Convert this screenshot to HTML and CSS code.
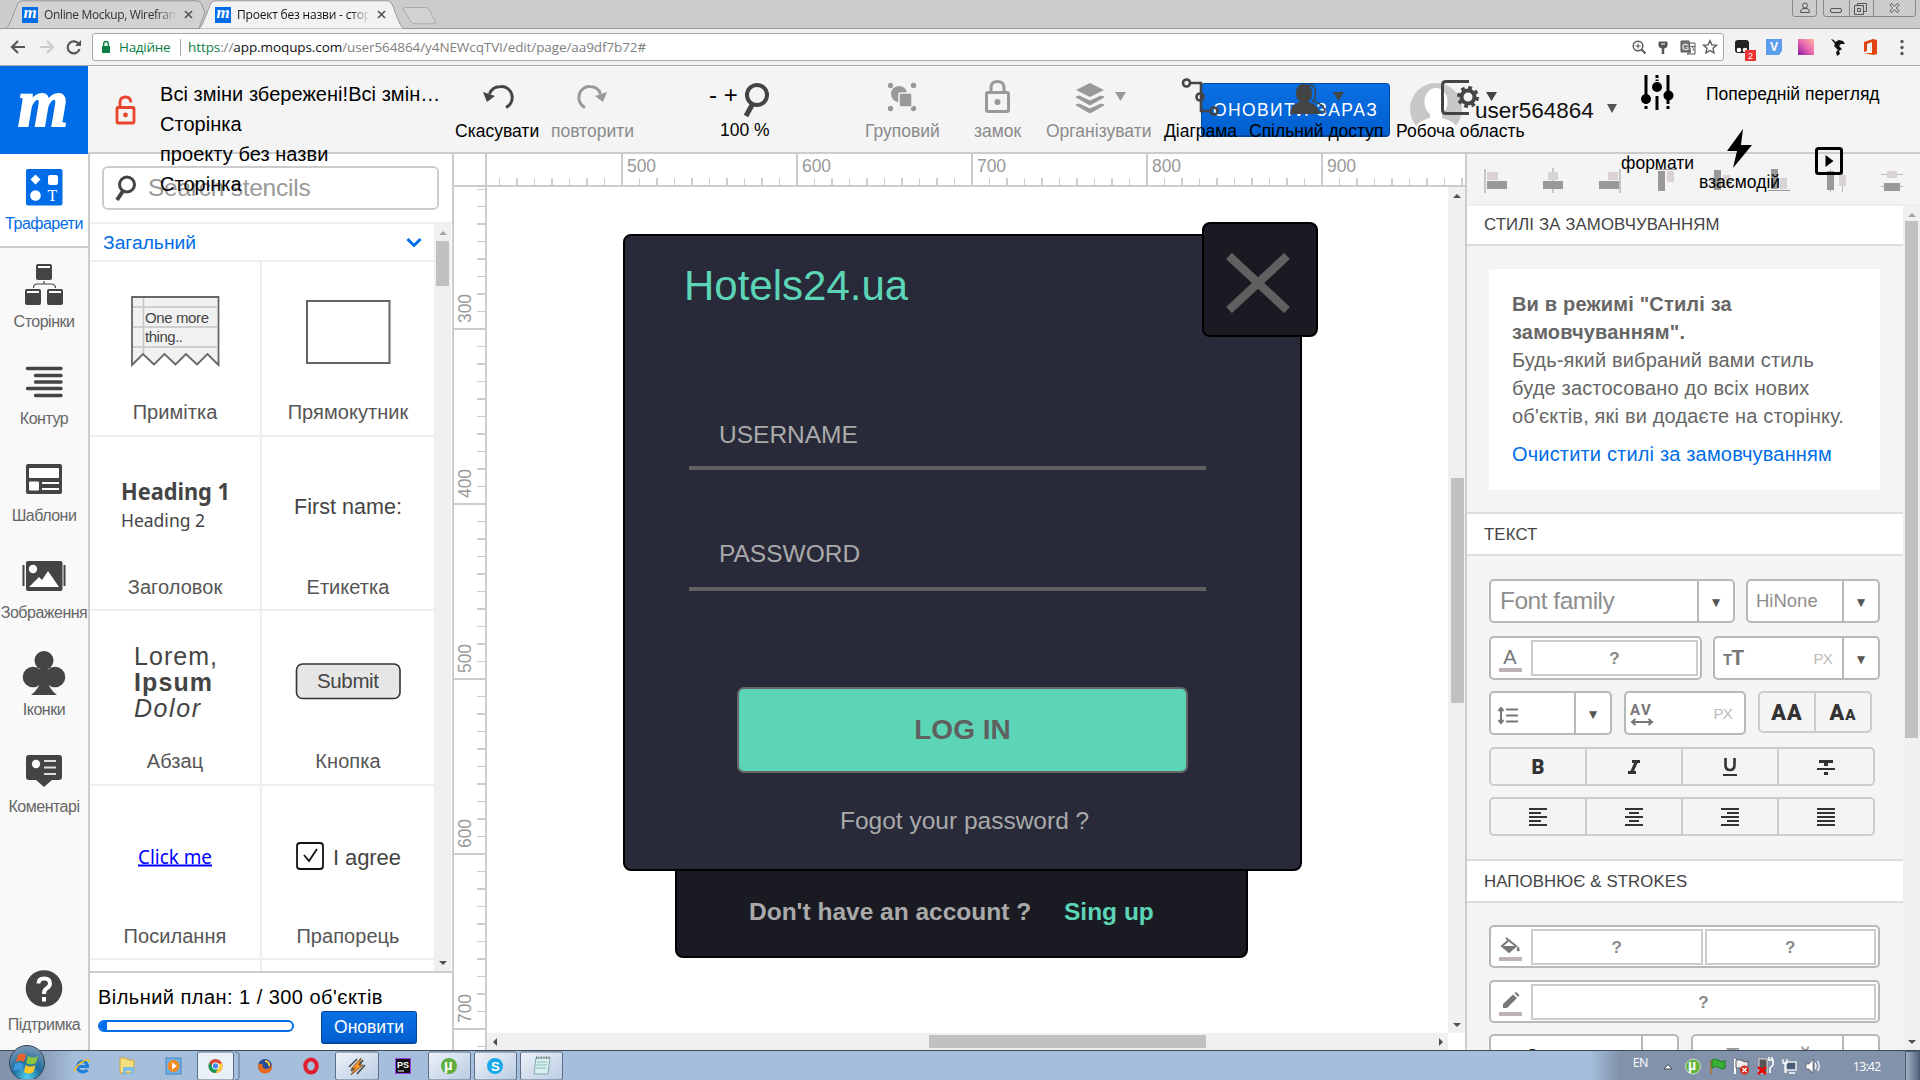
FILE: index.html
```html
<!DOCTYPE html>
<html lang="uk">
<head>
<meta charset="utf-8">
<title>Проект без назви - сторінка</title>
<link rel="stylesheet" href="styles.css">
</head>
<body>
<div class="screen">

<div class="tabstrip">
  <svg class="tab-shapes" width="1920" height="29">
    <rect y="28" width="1920" height="1" fill="#999"/>
    <path d="M6 28.5C10 26 15 9 18 3Q19.500 .8 23 .8H197Q200 .8 201.500 4L205 12L199 28.500Z" fill="#d2d2d2" stroke="#999"/>
    <path d="M199 29C203 26 208 9 211 3Q212.500 .8 216 .8H387Q390.500 .8 392 4C395 10 399 26 404 29Z" fill="#f2f2f2" stroke="#999"/>
    <path d="M402 28.600H1920M0 28.600H199" stroke="#999"/>
    <path d="M406 7.500H425Q428 7.500 429 9.500L435.500 22Q436 23.800 434 23.800H415Q412 23.800 411 22L403 9Q402.500 7.500 406 7.500Z" fill="#d2d2d2" stroke="#aaa"/>
  </svg>
  <div class="tab tab-back"><span class="fav">m</span><span class="tab-text">Online Mockup, Wirefram</span><svg width="9" height="9"><path d="M1 1l7 7M8 1l-7 7" stroke="#555" stroke-width="1.700"/></svg></div>
  <div class="tab"><span class="fav">m</span><span class="tab-text active">Проект без назви - стор</span><svg width="9" height="9"><path d="M1 1l7 7M8 1l-7 7" stroke="#555" stroke-width="1.700"/></svg></div>
  <svg class="win" width="126" height="18" fill="none" stroke="#888">
    <path d="M.5 0V14Q.5 16.500 3 16.500H22Q24.500 16.500 24.500 14V0M31.500 0V14Q31.500 16.500 34 16.500H121Q123.500 16.500 123.500 14V0M57.500 0V16.500M81.500 0V16.500"/>
    <g stroke="#555"><circle cx="13" cy="5.500" r="2.500"/><path d="M8.500 12.500Q8.500 9 11 8.500H15Q17.500 9 17.500 12.500Z"/><rect x="38.500" y="8.500" width="11" height="4" rx="1.500"/><path d="M65.500 5.500V3.500H74.500V11.500H72M62.500 5.500H71.500V14.500H62.500ZM65.500 8.500H68.500V11.500H65.500Z"/><path d="M98.500 4L106.500 12M106.500 4L98.500 12" stroke-width="3"/><path d="M99 4.500L106 11.500M106 4.500L99 11.500" stroke="#eee" stroke-width="1.200"/></g>
  </svg>
</div>

<div class="addressbar">
  <svg width="84" height="36" fill="none" stroke="#555" stroke-width="2.200">
    <path d="M25 18H12M18 12L12 18L18 24"/><path d="M40 18H53M47 12L53 18L47 24" stroke="#ccc"/><path d="M79 15.500A6 6 0 1 0 79.500 20"/><path d="M81 11V17H75Z" fill="#555" stroke="none"/>
  </svg>
  <div class="omnibox">
    <svg width="10" height="14"><path d="M1 6H9V13H1Z" fill="#0b8043"/><path d="M2.700 7V4A2.300 2.500 0 0 1 7.300 4V7" fill="none" stroke="#0b8043" stroke-width="1.400"/></svg>
    <span class="secure">Надійне</span><i class="sep"></i>
    <span class="url"><b>https</b>://<em>app.moqups.com</em>/user564864/y4NEWcqTVI/edit/page/aa9df7b72#</span>
    <svg class="omni-icons" width="96" height="26" fill="none" stroke="#555" stroke-width="1.400">
      <circle cx="11" cy="12" r="4.800"/><path d="M14.500 15.500L18.500 19.500" stroke-width="2"/><path d="M8.500 12H13.500M11 9.500V14.500" stroke-width="1"/>
      <path d="M32 8H40V12Q40 14 36 14Q32 14 32 12ZM36 13V20" fill="#555" stroke-width="1"/><path d="M36 14V20" stroke-width="2.500"/><path d="M34 10H38" stroke="#fff" stroke-width="1"/>
      <path d="M54 7H62L64 18H54Z" fill="#777" stroke="#555" stroke-width="1"/><path d="M63 9H68V20H60L64 18" fill="#fff" stroke-width="1"/><text x="55" y="16" font-size="9" fill="#fff" stroke="none">G</text><path d="M63.500 12.500H68M65 12L67 17" stroke-width=".9"/>
      <path d="M83 6.500L84.900 10.800L89.500 11.200L86 14.300L87.100 18.900L83 16.500L78.900 18.900L80 14.300L76.500 11.200L81.100 10.800Z" stroke-width="1.300"/>
    </svg>
  </div>
  <svg class="ext" width="190" height="36">
    <rect x="9" y="11" width="14" height="13" rx="3" fill="#222"/><circle cx="13" cy="21" r="2.300" fill="#fff"/><circle cx="19" cy="21" r="2.300" fill="#fff"/>
    <rect x="19" y="21" width="11" height="11" fill="#e33"/><text x="22" y="30" font-size="9" fill="#fff">2</text>
    <path d="M40 10H56V22L53 26H40Z" fill="#5c9ded"/><text x="44" y="22" font-size="12" font-weight="bold" fill="#fff">V</text>
    <defs><linearGradient id="pk" x1="1" y1="0" x2="0" y2="1"><stop offset="0" stop-color="#ffb3a0"/><stop offset=".5" stop-color="#e968b0"/><stop offset="1" stop-color="#8b1a9e"/></linearGradient></defs>
    <rect x="72" y="10" width="16" height="16" fill="url(#pk)"/>
    <path d="M105 10L108 11L109 13L113 11L117 12L119 15H115L113 17L116 20L113 22L114 25L111 27L110 23L112 21L108 17L109 15Z" fill="#111"/>
    <path d="M138 13L147 10L151 11V25L147 26L138 24L146 24V13L141 15V22L138 23Z" fill="#e2430f"/>
    <g fill="#555"><circle cx="176" cy="12.500" r="1.700"/><circle cx="176" cy="18.500" r="1.700"/><circle cx="176" cy="24.500" r="1.700"/></g>
  </svg>
</div>

<header class="apphead">
  <svg class="logo" width="88" height="88"><rect width="88" height="88" fill="#006ce8"/><text x="18" y="60" textLength="50" lengthAdjust="spacingAndGlyphs" class="logo-m">m</text></svg>
  <svg class="unlock" width="30" height="50" fill="none" stroke="#e8452c" stroke-width="2.800"><rect x="3" y="14.500" width="17" height="15.500" rx="1"/><path d="M6 14V9Q6.500 4 11.500 4Q16.500 4 17 9.500"/><circle cx="11.500" cy="22" r="2.400" fill="#e8452c" stroke="none"/></svg>
  <div class="titles"><div>Всі зміни збережені!Всі змін…</div><div>Сторінка</div><div>проекту без назви</div><div>Сторінка</div></div>

  <div class="upgrade-now">ОНОВИТИ ЗАРАЗ</div>
  <div class="user">
    <svg width="54" height="54"><defs><clipPath id="av"><circle cx="27" cy="27" r="26"/></clipPath></defs><g clip-path="url(#av)"><rect width="54" height="54" fill="#c8c8c8"/><ellipse cx="27" cy="20" rx="11.500" ry="14" fill="#fff"/><path d="M21 30H33V36Q50 40 52 56H2Q4 40 21 36Z" fill="#fff"/></g></svg>
    <span>user564864</span><i class="caret"></i>
  </div>

  <div class="tools">
    <div class="tool"><svg><g fill="none" stroke="#444" stroke-width="3"><path d="M34.500 28Q37 20.500 46 20.500A10.500 11 0 0 1 51 41.500"/></g><path d="M28 26L40 30L32 36Z" fill="#444"/></svg><span>Скасувати</span></div>
    <div class="tool off"><svg><g fill="none" stroke="#999" stroke-width="3"><path d="M49.500 28Q47 20.500 39 20.500A10.500 11 0 0 0 34 41.500"/></g><path d="M56 26L44 30L52 36Z" fill="#999"/></svg><span>повторити</span></div>
    <div class="tool zoomer"><div class="zoomrow"><span>- +</span><svg width="30" height="42"><circle cx="15" cy="13" r="10" fill="none" stroke="#444" stroke-width="4"/><path d="M10 23L4 34" stroke="#444" stroke-width="5"/></svg></div><span class="pct">100 %</span></div>
    <div class="tool off"><svg fill="#999"><circle cx="25.500" cy="19.500" r="2.700"/><circle cx="48.500" cy="19.500" r="2.700"/><circle cx="25.500" cy="42.500" r="2.700"/><circle cx="48.500" cy="42.500" r="2.700"/><circle cx="34" cy="28" r="8"/><rect x="34" y="27" width="13" height="14" rx="1.500" stroke="#f4f4f4" stroke-width="1.500"/></svg><span>Груповий</span></div>
    <div class="tool off"><svg fill="none" stroke="#999" stroke-width="3"><rect x="12.500" y="26.500" width="22" height="19" rx="1.500"/><path d="M17 26V21Q17.500 15.500 23.500 15.500Q29.500 15.500 30 21V26"/><circle cx="23.500" cy="36" r="3" fill="#999" stroke="none"/></svg><span>замок</span></div>
    <div class="tool off"><svg fill="#999"><path d="M44 17L58 24L44 31L30 24Z"/><path d="M30 31L33 30L44 35L55 30L58 31L44 39ZM30 39L33 38L44 43L55 38L58 39L44 47Z" stroke="#999"/><path d="M69 26H80L74.500 35Z"/></svg><span>Організувати</span></div>
    <div class="tool"><svg fill="none" stroke="#444" stroke-width="2.600"><path d="M26 17H37V45H45"/><circle cx="22.500" cy="17" r="3.500"/><circle cx="36" cy="31" r="3.500"/><circle cx="50" cy="45" r="3.500"/></svg><span>Діаграма</span></div>
    <div class="tool"><svg fill="#444"><path d="M59 20Q64 17 66 23Q68 31 64 35Q75 38 76 46H66" fill="none" stroke="#444" stroke-width="1.500"/><path d="M55 18Q63 18 63 27Q63 33 59 36Q69 38 71 48H41Q42 38 51 36Q47 33 47 27Q47 18 55 18Z"/><path d="M84 26H95L89.500 35Z"/></svg><span>Спільний доступ</span></div>
    <div class="tool"><svg fill="none" stroke="#444" stroke-width="3"><path d="M73 15.500H50Q46.500 15.500 46.500 19V44Q46.500 47.500 50 47.500H73"/><circle cx="72" cy="31" r="6.500" stroke-width="4"/><circle cx="72" cy="31" r="9.500" stroke-width="3" stroke-dasharray="3.800 3.660"/><path d="M90 26H101L95.500 35Z" fill="#444" stroke="none"/></svg><span>Робоча область</span></div>
  </div>

  <div class="modes">
    <svg class="m-format" width="40" height="40"><g stroke="#000" stroke-width="3"><path d="M8 1V30M30 1V30"/><path d="M19 1V7M19 22V36"/></g><rect x="6.500" y="32" width="3" height="3"/><rect x="28.500" y="32" width="3" height="3"/><rect x="17" y="4" width="4" height="1.500" fill="#f4f4f4"/><circle cx="8" cy="25" r="5"/><circle cx="19" cy="13" r="5"/><circle cx="30.500" cy="21.500" r="5"/></svg>
    <span class="m-preview">Попередній перегляд</span>
    <span class="m-formats">формати</span>
    <svg class="m-bolt" width="28" height="40"><path d="M17 0L1 22H11L7 39L26 16H15Z"/></svg>
    <span class="m-inter">взаємодій</span>
    <svg class="m-play" width="28" height="28"><rect x="1.500" y="1.500" width="25" height="25" rx="2" fill="none" stroke="#000" stroke-width="3"/><path d="M10.500 8L18.500 14L10.500 20Z"/></svg>
  </div>
</header>

<main class="work">
  <nav class="side">
    <div class="nav on"><svg><rect x="26" y="15" width="36.500" height="36.500" rx="2" fill="#006ce8"/><g fill="#fff"><path d="M35.500 20.500L40.500 25.500L35.500 30.500L30.500 25.500Z"/><rect x="48" y="21" width="10" height="10" rx="2"/><circle cx="35.500" cy="41.500" r="5.300"/></g><text class="serif" x="47.500" y="47" font-size="16" fill="#fff">T</text></svg><span>Трафарети</span></div>
    <div class="nav"><svg fill="#444"><rect x="36" y="16" width="16" height="16" rx="2"/><rect x="25" y="41" width="16" height="16" rx="2"/><rect x="47" y="41" width="16" height="16" rx="2"/><path d="M38 19H50M27 44H39M49 44H61" stroke="#fff" stroke-width="1.800"/><path d="M44 33V36M33.500 40Q33.500 36 37 36H51Q55.500 36 55.500 40" fill="none" stroke="#444" stroke-width="1.200"/></svg><span>Сторінки</span></div>
    <div class="nav"><svg stroke="#444" stroke-width="3.400" stroke-linecap="round"><path d="M27.500 23.500H61M35.500 30.500H61M35.500 37H61M27.500 43.500H61M35.500 50.500H61"/></svg><span>Контур</span></div>
    <div class="nav"><svg><rect x="26" y="22" width="36" height="30" rx="2" fill="#444"/><g fill="#fff"><rect x="29" y="26" width="30" height="10" rx="1"/><rect x="29" y="39.500" width="10" height="9" rx="1"/><rect x="42" y="40" width="17" height="2"/><rect x="42" y="46" width="17" height="2"/></g></svg><span>Шаблони</span></div>
    <div class="nav"><svg><rect x="26" y="22" width="36.500" height="30" rx="2" fill="#444"/><path d="M23.500 26V47M64.500 26V47" stroke="#444" stroke-width="2"/><circle cx="33" cy="30" r="4.200" fill="#fff"/><path d="M29 48L39 38L42 41L48 32L59 48Z" fill="#fff"/></svg><span>Зображення</span></div>
    <div class="nav"><svg fill="#444"><circle cx="44" cy="24.500" r="9.500"/><circle cx="33" cy="41" r="10.300"/><circle cx="55" cy="41" r="10.300"/><path d="M40 32H48L47 44Q49 53 57 59H31Q39 53 41 44Z"/></svg><span>Іконки</span></div>
    <div class="nav"><svg fill="#444"><path d="M29 22H59Q62 22 62 25V44Q62 47 59 47H52L44 54L36 47H29Q26 47 26 44V25Q26 22 29 22Z"/><circle cx="36" cy="31" r="4.200" fill="#fff"/><path d="M44 28H56M44 34.500H56M44 41H56" stroke="#ddd" stroke-width="1.800"/></svg><span>Коментарі</span></div>
    <div class="nav support"><svg><circle cx="44" cy="37.500" r="18.300" fill="#444"/><path d="M38.500 32.500Q38.500 27.500 44 27.500Q50 27.500 50 32.500Q50 35.500 46.500 37.500Q44 39 44 43" fill="none" stroke="#fff" stroke-width="4"/><rect x="42" y="46" width="4" height="4.500" fill="#fff"/></svg><span>Підтримка</span></div>
  </nav>

  <aside class="stencils">
    <div class="searchrow"><div class="search"><svg width="34" height="40" fill="none" stroke="#444"><circle cx="25" cy="16.500" r="7.500" stroke-width="3"/><path d="M21 23L15 32" stroke-width="4"/></svg><span>Search stencils</span></div></div>
    <div class="listwrap">
      <div class="list">
        <div class="cat"><span>Загальний</span><svg width="16" height="11" fill="none" stroke="#006ce8" stroke-width="3"><path d="M1.500 2L8 8.500L14.500 2"/></svg></div>
        <div class="cells">
          <div class="cell"><svg><path d="M42 35H128.500V103L117.500 92L107 102.500L96 92L85.500 102.500L74.500 92L64 102.500L53 92L42 103Z" fill="#f1f1f1" stroke="#666" stroke-width="1.800"/><path d="M43 45H128M43 65H128M43 85H128M53.500 36V91" stroke="#c4c4c4" stroke-width="1.500"/><text x="55" y="61" font-size="15" textLength="64">One more</text><text x="55" y="79.500" font-size="15" textLength="38">thing..</text></svg><span>Примітка</span></div>
          <div class="cell"><svg><rect x="45" y="39" width="82.500" height="62" fill="#fff" stroke="#666" stroke-width="2"/></svg><span>Прямокутник</span></div>
          <div class="cell"><svg><text x="31" y="62.500" class="hum" font-size="24" font-weight="bold" textLength="109" lengthAdjust="spacingAndGlyphs">Heading 1</text><text x="31" y="90" class="hum" font-size="18" textLength="84" lengthAdjust="spacingAndGlyphs">Heading 2</text></svg><span>Заголовок</span></div>
          <div class="cell"><svg><text x="32" y="76.500" font-size="21.500" textLength="108">First name:</text></svg><span>Етикетка</span></div>
          <div class="cell"><svg><text x="44" y="53.500" font-size="25" textLength="83">Lorem,</text><text x="44" y="79.500" font-size="25" font-weight="bold" textLength="78">Ipsum</text><text x="44" y="105.500" font-size="25" font-style="italic" textLength="66">Dolor</text></svg><span>Абзац</span></div>
          <div class="cell"><svg><rect x="34.500" y="53" width="103.500" height="34.500" rx="6" fill="#e6e6e6" stroke="#333" stroke-width="1.600"/><text x="55" y="77" font-size="20.500" textLength="62">Submit</text></svg><span>Кнопка</span></div>
          <div class="cell"><svg><text x="48" y="77.500" class="hum link" font-size="20" textLength="74" lengthAdjust="spacingAndGlyphs" text-decoration="underline">Click me</text></svg><span>Посилання</span></div>
          <div class="cell"><svg><rect x="35" y="57" width="26" height="26" rx="3" fill="#fff" stroke="#111" stroke-width="1.800"/><path d="M42 69L47 75L55 63" fill="none" stroke="#111" stroke-width="1.800"/><text x="71" y="79" font-size="22" textLength="68">I agree</text></svg><span>Прапорець</span></div>
          <div class="cell"></div><div class="cell"></div>
        </div>
      </div>
      <div class="vbar"><i class="up light"></i><b class="thumb-a"></b><i class="down"></i></div>
    </div>
    <div class="plan"><div class="plan-text">Вільний план: 1 / 300 об'єктів</div><div class="planrow"><div class="progress"><i></i></div><div class="btn">Оновити</div></div></div>
  </aside>

  <section class="board">
    <svg class="rulers" width="1011" height="896">
      <defs>
        <pattern id="hx" x="167" y="0" width="35" height="35" patternUnits="userSpaceOnUse"><rect width="2" height="35" fill="#ccc"/><rect x="18" width="1" height="35" fill="#ccc"/></pattern>
        <pattern id="vy" x="0" y="174" width="35" height="35" patternUnits="userSpaceOnUse"><rect width="35" height="2" fill="#ccc"/><rect y="18" width="35" height="1" fill="#ccc"/></pattern>
      </defs>
      <rect x="36" y="24" width="975" height="8" fill="url(#hx)"/><rect x="23" y="35" width="8" height="861" fill="url(#vy)"/>
      <path d="M0 32H1011M32 0V896" stroke="#ccc" stroke-width="2"/>
      <path d="M168 0V32M343 0V32M518 0V32M693 0V32M868 0V32M0 175H32M0 350H32M0 525H32M0 700H32M0 875H32" stroke="#ccc" stroke-width="2"/>
      <g class="rl"><text x="173" y="18">500</text><text x="348" y="18">600</text><text x="523" y="18">700</text><text x="698" y="18">800</text><text x="873" y="18">900</text>
      <text transform="translate(17 169) rotate(-90)">300</text><text transform="translate(17 344) rotate(-90)">400</text><text transform="translate(17 519) rotate(-90)">500</text><text transform="translate(17 694) rotate(-90)">600</text><text transform="translate(17 869) rotate(-90)">700</text></g>
    </svg>
    <div class="canvas">
      <div class="shape signup"></div>
      <div class="shape card"></div>
      <div class="shape close"><svg width="64" height="60"><path d="M3 3L61 57M61 3L3 57" stroke="#606060" stroke-width="8.500"/></svg></div>
      <div class="txt brand">Hotels24.ua</div>
      <div class="txt user-l">USERNAME</div><div class="rule r1"></div>
      <div class="txt pass-l">PASSWORD</div><div class="rule r2"></div>
      <div class="shape login">LOG IN</div>
      <div class="txt forgot">Fogot your password ?</div>
      <div class="txt noacc">Don't have an account ?</div>
      <div class="txt sing">Sing up</div>
    </div>
    <div class="vbar canvas-v"><i class="up"></i><b></b><i class="down"></i></div>
    <div class="hbar"><i class="left"></i><b></b><i class="right"></i></div>
  </section>

  <aside class="props">
    <div class="align">
      <svg width="28" height="28"><path d="M3 2V26" stroke="#999"/><rect x="5" y="5" width="11" height="8" fill="#d9d3d3"/><rect x="5" y="14" width="20" height="8" fill="#999"/></svg>
      <svg width="28" height="28"><path d="M14 1V26" stroke="#999"/><rect x="9" y="5" width="10" height="8" fill="#d9d3d3"/><rect x="4" y="14" width="20" height="8" fill="#999"/></svg>
      <svg width="28" height="28"><path d="M25 2V26" stroke="#999"/><rect x="13" y="5" width="10" height="8" fill="#d9d3d3"/><rect x="4" y="14" width="20" height="8" fill="#999"/></svg>
      <svg width="28" height="28"><path d="M3 2.500H25" stroke="#999"/><rect x="6" y="4" width="7" height="20" fill="#999"/><rect x="15" y="4" width="7" height="11" fill="#d9d3d3"/></svg>
      <svg width="28" height="28"><path d="M3 13.500H25" stroke="#999"/><rect x="6" y="3" width="7" height="20" fill="#999"/><rect x="15" y="8" width="7" height="11" fill="#d9d3d3"/></svg>
      <svg width="28" height="28"><path d="M3 23.500H25" stroke="#999"/><rect x="6" y="2" width="7" height="20" fill="#999"/><rect x="15" y="11" width="7" height="11" fill="#d9d3d3"/></svg>
      <svg width="28" height="28"><path d="M9.500 2V25M21.500 2V25" stroke="#bbb"/><rect x="6" y="4" width="7" height="19" fill="#999"/><rect x="18" y="8" width="7" height="11" fill="#d9d3d3"/></svg>
      <svg width="28" height="28"><path d="M3 7.500H25M3 19.500H25" stroke="#bbb"/><rect x="9" y="4" width="10" height="7" fill="#d9d3d3"/><rect x="6" y="16" width="16" height="8" fill="#999"/></svg>
    </div>
    <div class="propwrap">
      <div class="proplist">
        <h3 class="first">СТИЛІ ЗА ЗАМОВЧУВАННЯМ</h3>
        <div class="info"><b>Ви в режимі "Стилі за<br>замовчуванням".</b><br>Будь-який вибраний вами стиль<br>буде застосовано до всіх нових<br>об'єктів, які ви додаєте на сторінку.<div class="clear">Очистити стилі за замовчуванням</div></div>
        <h3>ТЕКСТ</h3>
        <div class="form">
          <div class="row r-font"><div class="field sel"><span class="ff">Font family</span><i>▼</i></div><div class="field sel"><span class="hn">HiNone</span><i>▼</i></div></div>
          <div class="row r-col"><div class="field swatch"><span class="pick"><b>A</b><u></u></span><em>?</em></div><div class="field sel"><span class="px"><b class="tt"><small>T</small>T</b>PX</span><i>▼</i></div></div>
          <div class="row r-line"><div class="field sel"><span><svg width="24" height="22" fill="none" stroke="#777" stroke-width="2"><path d="M4 5V18M1.500 7L4 4L6.500 7M1.500 16L4 19L6.500 16M9 5.500H21M9 11.500H21M9 17.500H21"/></svg></span><i>▼</i></div><div class="field"><span class="px"><b class="av">AV<svg width="24" height="8" fill="none" stroke="#777" stroke-width="2"><path d="M3 4H21M5.500 1L2 4L5.500 7M18.500 1L22 4L18.500 7"/></svg></b>PX</span></div><div class="seg two"><span class="aa">AA</span><span class="aa">A<small>A</small></span></div></div>
          <div class="seg four"><span class="bd">B</span><span><svg width="16" height="20"><path d="M6 3H14V6H11.500L8 14H10V17H2V14H4.500L8 6H6Z" fill="#333"/></svg></span><span><svg width="18" height="24" fill="none" stroke="#333"><path d="M4.500 3V10Q4.500 15 9 15Q13.500 15 13.500 10V3" stroke-width="2.600"/><path d="M2 20H16" stroke-width="2"/></svg></span><span><svg width="20" height="20" fill="#333"><path d="M3 3H17V6H12V9H8V6H3ZM1 11H19V13H1ZM8 15H12V18H8Z"/></svg></span></div>
          <div class="seg four"><span><svg><path d="M1 2H19M1 6H13M1 10H19M1 14H13M1 18H19"/></svg></span><span><svg><path d="M1 2H19M5 6H15M1 10H19M5 14H15M1 18H19"/></svg></span><span><svg><path d="M1 2H19M7 6H19M1 10H19M7 14H19M1 18H19"/></svg></span><span><svg><path d="M1 2H19M1 6H19M1 10H19M1 14H19M1 18H19"/></svg></span></div>
        </div>
        <h3>НАПОВНЮЄ &amp; STROKES</h3>
        <div class="form fills">
          <div class="field swatch"><span class="pick"><svg width="23" height="18" fill="#777"><path d="M7 1L17 9L10 15L3 9L9 4" fill="none" stroke="#777" stroke-width="2"/><path d="M3 9H17L10 15.500Z"/><path d="M19 9Q22 13 19.500 14.500Q16 14 19 9Z"/></svg><u></u></span><em>?</em><em>?</em></div>
          <div class="field swatch"><span class="pick"><svg width="23" height="18" fill="#777"><path d="M4 12L14 2.500L18 6L8 16H4ZM15.500 1L17 0L20.500 3L19 5Z"/></svg><u></u></span><em>?</em></div>
          <div class="row r-stroke"><div class="field sel"><span class="q">?</span><i>▼</i></div><div class="field sel"><span class="solid">Твердий</span><i>▼</i></div></div>
        </div>
      </div>
      <div class="vbar props-v"><i class="up light"></i><b></b><i class="down"></i></div>
    </div>
  </aside>
</main>

<footer class="taskbar">
  <svg width="56" height="34" class="orb"><defs><radialGradient id="og" cx=".5" cy=".9" r=".9"><stop offset="0" stop-color="#4fd0ee"/><stop offset=".45" stop-color="#1d6d9e"/><stop offset="1" stop-color="#7f9ab5"/></radialGradient></defs><circle cx="27" cy="18" r="17.500" fill="url(#og)" stroke="#345"/><path d="M18 10Q22 7 26 10L24 17Q20 14 16 17Z" fill="#f0622c"/><path d="M28 11Q33 14 38 11L36 18Q31 21 26 18Z" fill="#8cc63e"/><path d="M15 19Q19 16 23.500 19L22 26Q18 23 13.500 26Z" fill="#3f9be0"/><path d="M25.500 20Q30 23 35.500 20L33.500 27Q29 30 24 27Z" fill="#fdc727"/></svg>
  <svg class="apps" width="520" height="30">
    <defs><linearGradient id="tb" x1="0" y1="0" x2="1" y2="1"><stop offset="0" stop-color="#eef3f9"/><stop offset="1" stop-color="#b9cbe2"/></linearGradient></defs>
    <g fill="url(#tb)" stroke="#5d6f88"><rect x="146.500" y="1" width="36" height="28" rx="2" fill="#e9f0f8"/><path d="M184 1Q188 1 188 3V27Q188 29 184 29" fill="none"/><rect x="284.500" y="1" width="43" height="28" rx="2"/><rect x="377.500" y="1" width="42" height="28" rx="2"/><rect x="423.500" y="1" width="42" height="28" rx="2"/><rect x="469.500" y="1" width="42" height="28" rx="2"/></g>
    <g transform="translate(31 15)"><path d="M5.500 4Q0 8 -4 3.500Q-6 -3 0 -4.500Q5 -5 5.500 .5H-4" fill="none" stroke="#1d7fd6" stroke-width="3"/><path d="M-7 6Q-8 2 0 -4Q7 -8 7 -4" fill="none" stroke="#f2b92b" stroke-width="1.600"/></g>
    <path d="M69 7H75L77 9H83V22H69Z" fill="#f3dd7c" stroke="#c7a540"/><path d="M72 24V16H83V24H80V20H75V24Z" fill="#7dbbe8"/>
    <rect x="115" y="7" width="15" height="16" fill="#6cb0e6" stroke="#4b88c4"/><circle cx="122.500" cy="15" r="6" fill="#f58a1f"/><path d="M121 11.500L126 15L121 18.500Z" fill="#fff"/>
    <g transform="translate(164.500 15)"><circle r="7" fill="#db4437"/><path d="M-6 -3.500A7 7 0 0 0 0 7L3 1L-2 2Z" fill="#0f9d58"/><path d="M0 7A7 7 0 0 0 6.500 -2.500H0L3 2Z" fill="#ffcd40"/><circle r="3.200" fill="#4285f4" stroke="#fff"/></g>
    <g transform="translate(214 15)"><circle r="7" fill="#234e9c"/><path d="M-7 -3Q-8 7 0 7.500Q8 7 7 -2Q5 3 1 3Q-4 2 -2 -2Q-6 -1 -7 -3Z" fill="#e8681c"/><path d="M0 -5Q5 -4 4 0" stroke="#fcc530" stroke-width="2" fill="none"/></g>
    <ellipse cx="260" cy="15" rx="5.800" ry="6.500" fill="none" stroke="#e0202f" stroke-width="4"/>
    <path d="M298 16L306 8M300 20L306 14M306 23L314 14M304 20L312 9" stroke="#444" stroke-width="1.500"/><path d="M300 18L310 7L308 14H312L300 24L304 17Z" fill="#f6952b" stroke="#7a4a10" stroke-width=".8"/>
    <rect x="344.500" y="7.500" width="15" height="15" fill="#111" stroke="#9a3fe8"/><text x="346" y="17" font-size="9" font-weight="bold" fill="#fff">PS</text><path d="M347 20H353" stroke="#fff"/>
    <circle cx="398" cy="15" r="8" fill="#5fae3c"/><text x="393" y="19" font-size="15" font-weight="bold" fill="#fff">µ</text>
    <circle cx="444" cy="15" r="8" fill="#18a8ea"/><text x="440" y="20" font-size="13" font-weight="bold" fill="#fff">S</text>
    <path d="M485 7H499L497 23H483Z" fill="#d8efec" stroke="#7fa9ae"/><path d="M486 11H496M485.500 14H496M485 17H495" stroke="#8dbcc0"/><path d="M485 6.500H499" stroke="#666" stroke-dasharray="1 1.500" stroke-width="2"/>
  </svg>
  <div class="tray">
    <span class="lang">EN</span>
    <svg width="180" height="30">
      <path d="M8 18L12 13.500L16 18Z" fill="#fff" stroke="#445"/>
      <circle cx="37" cy="15.500" r="7.500" fill="#65b543" stroke="#fff" stroke-width=".6"/><text x="32" y="19" font-size="14" font-weight="bold" fill="#fff">µ</text>
      <path d="M55 9V23" stroke="#a37b4a" stroke-width="2"/><path d="M56 9Q60 7 63 9.500T69 9.500V17Q66 19 63 16.500T56 17Z" fill="#37b034" stroke="#1d7c22"/>
      <path d="M79 8V23" stroke="#fff" stroke-width="2"/><path d="M80 9Q84 8 87 10T92 10V17H80Z" fill="#eee" stroke="#556"/><circle cx="88.500" cy="19" r="4.500" fill="#d92b20"/><path d="M86.500 17L90.500 21M90.500 17L86.500 21" stroke="#fff" stroke-width="1.300"/>
      <rect x="103" y="8" width="8" height="14" fill="#555" stroke="#ddd"/><path d="M112 9H117V14L114 17V22M113 6V9M116 6V9" stroke="#fff" stroke-width="1.600" fill="none"/><path d="M102 16L110 23M110 16L102 23" stroke="#e00" stroke-width="2.500"/>
      <rect x="130" y="11" width="10" height="8" fill="#4a5d78" stroke="#fff" stroke-width="1.300"/><path d="M133 22H139M127 8V12H131V8M129 12V21H131" stroke="#fff" stroke-width="1.300" fill="none"/>
      <path d="M150 13H153L157 8V22L153 18H150Z" fill="#fff" stroke="#445" stroke-width=".6"/><path d="M159 12Q161 15 159 18M161.500 10Q165 15 161.500 20" stroke="#fff" fill="none" stroke-width="1.300"/>
    </svg>
    <span class="clock">13:42</span><i class="desk"></i>
  </div>
</footer>
</div>
</body>
</html>
```
FILE: styles.css
```css
* { box-sizing: border-box; }
body { margin: 0; font-family: "Liberation Sans", Arial, sans-serif; background: #fff; }
.screen { width: 1920px; height: 1080px; overflow: hidden; display: flex; flex-direction: column; position: relative; }
svg { display: block; flex: none; }
svg text { font-family: "Liberation Sans", Arial, sans-serif; }

/* browser chrome */
.tabstrip { height: 29px; background: #ccc; display: flex; position: relative; flex: none; font: 12px "Open Sans", sans-serif; }
.tab-shapes { position: absolute; left: 0; top: 0; }
.tab { position: relative; width: 193px; height: 29px; padding-left: 22px; display: flex; align-items: center; }
.fav { width: 16px; height: 16px; background: #006ce8; color: #fff; font: italic bold 17px/12px "Liberation Serif", serif; text-align: center; }
.tab-text { width: 133px; margin: 0 7px 0 6px; white-space: nowrap; overflow: hidden; letter-spacing: -.35px; color: #333; -webkit-mask-image: linear-gradient(90deg, #000 85%, transparent); mask-image: linear-gradient(90deg, #000 85%, transparent); }
.tab-text.active { color: #111; letter-spacing: -.2px; }
.win { margin-left: auto; margin-right: 2px; position: relative; }
.addressbar { height: 37px; background: #f2f2f2; border-bottom: 1px solid #aaa; display: flex; flex: none; font: 13.5px "Open Sans", sans-serif; }
.omnibox { margin: 4px 0 4px 8px; width: 1632px; height: 28px; border: 1px solid #a9a9a9; border-radius: 3px; background: #fff; display: flex; align-items: center; padding-left: 8px; }
.secure { color: #0b8043; margin-left: 8px; width: 52px; letter-spacing: -.3px; white-space: nowrap; }
.sep { width: 1px; height: 17px; background: #aaa; margin: 0 7px 0 9px; }
.url { color: #808080; letter-spacing: -.09px; white-space: nowrap; }
.url b { color: #0b8043; font-weight: normal; }
.url em { color: #111; font-style: normal; }
.omni-icons { margin-left: auto; margin-right: 0; }
.ext { margin-left: 2px; }

/* application header */
.apphead { height: 88px; background: #f4f4f4; border-bottom: 2px solid #ccc; flex: none; display: flex; position: relative; z-index: 2; }
svg .logo-m { font: italic bold 68px "Liberation Serif", serif; fill: #fff; stroke: #fff; stroke-width: 2; }
svg .serif { font-family: "Liberation Serif", serif; }
.unlock { margin: 27px 0 0 26px; width: 30px; }
.titles { margin-left: 16px; width: 295px; padding-top: 13px; font-size: 20px; line-height: 30px; letter-spacing: .04px; color: #000; white-space: nowrap; position: relative; }
.tools { position: relative; display: grid; grid-template-columns: 96px 158px 156px 109px 72px 118px 85px 147px 129px; height: 88px; font-size: 17.5px; color: #000; }
.tool { justify-self: start; white-space: nowrap; }
.tool > svg { width: 1px; height: 55px; overflow: visible; }
.tool > span { display: block; line-height: 20px; }
.off { color: #8a8a8a; }
.zoomrow { height: 55px; display: flex; font-size: 24px; padding-top: 16px; line-height: 26px; }
.zoomrow svg { margin-left: 4px; }
.zoomrow span { white-space: pre; }
.tool .pct { padding-left: 11px; line-height: 18px; }
.upgrade-now { position: absolute; left: 1201px; top: 17px; width: 189px; height: 54px; border: 1px solid #0049a0; border-bottom-width: 2px; border-radius: 4px; background: linear-gradient(#0a70e4, #005fd0); color: #fff; font-size: 17.5px; letter-spacing: 1.4px; line-height: 53px; text-align: center; white-space: nowrap; }
.user { position: absolute; left: 1409px; top: 16px; display: flex; font-size: 22.5px; color: #111; }
.user span { margin: 14px 0 0 12px; line-height: 30px; }
.caret { margin: 22px 0 0 13px; width: 0; height: 0; border: 5.5px solid transparent; border-top: 9px solid #555; border-bottom: 0; }
.modes { position: absolute; left: 0; top: 0; font-size: 17.5px; line-height: 20px; white-space: nowrap; }
.modes > * { position: absolute; }
.m-format { left: 1638px; top: 8px; }
.m-preview { left: 1706px; top: 18px; }
.m-formats { left: 1621px; top: 87px; }
.m-bolt { left: 1726px; top: 63px; }
.m-inter { left: 1699px; top: 106px; }
.m-play { left: 1815px; top: 81px; }

.work { display: flex; height: 896px; flex: none; }
.side { width: 88px; background: #f9f9f9; display: flex; flex-direction: column; height: 896px; flex: none; }
.nav { height: 97px; text-align: center; font-size: 16px; letter-spacing: -.5px; color: #666; white-space: nowrap; flex: none; }
.nav svg { width: 88px; height: 64px; }
.nav span { display: block; line-height: 20px; margin: 0 -4px; }
.nav.on { height: 94px; background: #fff; border-bottom: 2px solid #ccc; color: #006ce8; }
.nav.on svg { height: 60px; }
.support { margin-top: 121px; }

.stencils { width: 366px; border-left: 2px solid #ccc; border-right: 2px solid #ccc; display: flex; flex-direction: column; flex: none; background: #fff; }
.searchrow { height: 70px; border-bottom: 2px solid #eee; padding: 12px 0 0 12px; flex: none; }
.search { width: 337px; height: 44px; border: 2px solid #ccc; border-radius: 6px; display: flex; align-items: center; font-size: 24.5px; color: #999; }
.search span { margin-left: 12px; letter-spacing: -.25px; }
.search svg { margin-left: -2px; }
.listwrap { display: flex; height: 749px; flex: none; overflow: hidden; border-bottom: 2px solid #ccc; }
.list { width: 344px; flex: none; }
.cat { height: 38px; border-bottom: 2px solid #eee; display: flex; justify-content: space-between; align-items: center; padding: 1px 12px 0 13px; color: #006ce8; font-size: 19.25px; }
.cells { display: grid; grid-template-columns: 172px 172px; grid-auto-rows: 174.5px; }
.cell { border-bottom: 2px solid #eee; font-size: 20px; color: #555; text-align: center; }
.cell:nth-child(odd) { border-right: 2px solid #eee; }
.cell svg { width: 170px; height: 138px; overflow: visible; fill: #444; }
.cell span { display: block; line-height: 24px; letter-spacing: .05px; }
svg .hum { font-family: "Noto Sans", "Open Sans", sans-serif; }
svg .link { fill: #00f; }
.vbar { width: 17px; background: #f0f0f0; display: flex; flex-direction: column; align-items: center; position: relative; }
.vbar b { width: 13px; background: #c1c1c1; }
.up, .down { width: 0; height: 0; border: 4px solid transparent; }
.up { border-top: 0; border-bottom: 4px solid #505050; margin-top: 7px; margin-bottom: 6px; }
.up.light { border-bottom-color: #a3a3a3; }
.down { border-bottom: 0; border-top: 4px solid #505050; margin-top: auto; margin-bottom: 6px; }
.thumb-a { height: 45px; }
.plan { padding: 12px 0 0 8px; font-size: 20px; }
.plan-text { line-height: 24px; height: 26px; white-space: nowrap; letter-spacing: .46px; }
.planrow { display: flex; }
.progress { width: 196px; height: 12px; margin-top: 9px; border: 2px solid #006ce8; border-radius: 6px; background: #fff; overflow: hidden; }
.progress i { display: block; width: 7px; height: 8px; background: #006ce8; }
.btn { margin-left: 27px; width: 96px; height: 33px; border: 1px solid #0049a0; border-bottom-width: 2px; border-radius: 3px; background: linear-gradient(#0a70e4, #005fd0); color: #fff; font-size: 17.5px; line-height: 30px; text-align: center; }

/* canvas */
.board { width: 1011px; display: grid; grid-template-columns: 33px 961px 17px; grid-template-rows: 33px 846px 17px; position: relative; flex: none; }
.rulers { position: absolute; left: 0; top: 0; }
.rl text { font-size: 17.5px; fill: #999; letter-spacing: -.1px; }
.canvas { grid-column: 2; grid-row: 2; position: relative; }
.canvas-v { grid-column: 3; grid-row: 2; width: 17px; align-items: flex-end; padding-right: 1px; }
.canvas-v .up, .canvas-v .down { margin-right: 3px; }
.canvas-v b { height: 225px; margin-top: 274px; }
.hbar { grid-column: 2; grid-row: 3; background: #f0f0f0; display: flex; align-items: center; position: relative; }
.hbar b { width: 277px; height: 13px; background: #c1c1c1; margin-left: 432px; }
.left, .right { width: 0; height: 0; border: 4px solid transparent; }
.left { border-left: 0; border-right: 4px solid #505050; margin-left: 6px; }
.right { border-right: 0; border-left: 4px solid #505050; margin-left: auto; margin-right: 5px; }
.shape { position: absolute; border: 2px solid #000; border-radius: 8px; background: #282a39; }
.card { left: 136px; top: 47px; width: 679px; height: 637px; }
.signup { left: 188px; top: 600px; width: 573px; height: 171px; background: #1a1a23; }
.close { left: 715px; top: 35px; width: 116px; height: 115px; background: #1a1a23; display: flex; padding: 29px 0 0 22px; }
.login { left: 250px; top: 500px; width: 451px; height: 86px; background: #5cd5b6; border-color: #666; border-radius: 7px; color: #606060; font: bold 28px/82px "Liberation Sans", sans-serif; text-align: center; }
.txt { position: absolute; white-space: nowrap; color: #aaa; font-size: 24.5px; line-height: 30px; }
.brand { left: 197px; top: 78px; font-size: 42px; line-height: 42px; color: #5cd5b6; }
.user-l { left: 232px; top: 233px; }
.pass-l { left: 232px; top: 352px; }
.forgot { left: 353px; top: 619px; }
.noacc { left: 262px; top: 710px; font-weight: bold; }
.sing { left: 577px; top: 710px; font-weight: bold; color: #5cd5b6; }
.rule { position: absolute; left: 202px; width: 517px; height: 4px; background: #606060; }
.r1 { top: 279px; }
.r2 { top: 400px; }

/* properties */
.props { width: 455px; border-left: 2px solid #ccc; background: #f4f4f4; flex: none; }
.align { height: 52px; border-bottom: 2px solid #eee; display: flex; gap: 28.500px; padding: 13px 0 0 15px; }
.propwrap { display: flex; height: 844px; overflow: hidden; }
.proplist { width: 436px; flex: none; }
h3 { margin: 0; height: 44px; border-top: 2px solid #ddd; border-bottom: 2px solid #ddd; background: #fff; padding-left: 17px; font-size: 16.8px; font-weight: normal; line-height: 41px; letter-spacing: .12px; color: #444; white-space: nowrap; }
h3.first { height: 40px; border-top: 0; line-height: 37px; }
.info { margin: 23px 0 22px 22px; width: 391px; height: 221px; background: #fff; padding: 21px 0 0 23px; font-size: 20px; letter-spacing: .17px; line-height: 28px; color: #666; white-space: nowrap; }
.clear { color: #006ce8; margin-top: 10px; }
.form { padding: 23px 0 0 22px; height: 303px; }
.row { display: flex; }
.field { height: 44px; border: 2px solid #b8b8b8; border-radius: 5px; background: #fff; display: flex; align-items: center; flex: none; }
.sel span { flex: 1; }
.sel i { width: 36px; height: 100%; border-left: 2px solid #b8b8b8; font: 10.5px/42px "DejaVu Sans", sans-serif; text-align: center; color: #555; }
.ff { font-size: 24.5px; color: #8e8e8e; padding-left: 9px; letter-spacing: -.5px; }
.hn { font-size: 18.5px; color: #8e8e8e; padding-left: 8px; }
.r-font .field:first-child { width: 246px; margin-right: 11px; }
.r-font .field:last-child { width: 134px; }
.r-col { margin-top: 13px; }
.r-col .field:first-child { width: 213px; margin-right: 11px; }
.r-col .field:last-child { width: 167px; }
.pick { width: 38px; flex: none; display: flex; flex-direction: column; align-items: center; padding-top: 4px; margin-right: 2px; }
.pick b { font-weight: normal; font-size: 20px; line-height: 18px; color: #777; }
.pick u { width: 23px; height: 4px; background: #bdb3b3; margin-top: 2px; }
.swatch em { flex: 1; height: 36px; border: 2px solid #ccc; margin-right: 2px; font: bold 17px/34px "Liberation Sans", sans-serif; color: #888; text-align: center; }
.px { display: flex; align-items: center; justify-content: space-between; flex: 1; color: #bbb; font-size: 15px; padding: 1px 10px 0 8px; letter-spacing: -.8px; }
.tt { font: bold 21px/24px "Roboto", sans-serif; color: #777; letter-spacing: -1px; }
.tt small { font-size: 15px; }
.r-line { margin-top: 11px; }
.r-line .field:first-child { width: 123px; margin-right: 12px; }
.r-line .field:nth-child(2) { width: 122px; margin-right: 12px; }
.r-line .sel svg { margin: 4px 0 0 6px; }
.r-line .px { padding: 1px 12px 0 4px; }
.av { font: bold 15px/15px "Roboto", sans-serif; letter-spacing: 1.5px; color: #777; display: block; margin-top: 1px; }
.seg { display: flex; border: 2px solid #ccc; border-radius: 5px; }
.seg span { flex: 1; display: flex; align-items: center; justify-content: center; color: #333; }
.seg span + span { border-left: 2px solid #ccc; }
.two { width: 114px; height: 42px; }
.seg .aa { font: 900 21.5px/40px "Roboto", sans-serif; letter-spacing: 1px; align-items: baseline; }
.aa small { font-size: 15px; }
.four { width: 386px; height: 39px; margin-top: 12px; }
.four + .four { margin-top: 11px; }
.four + .four svg { width: 20px; height: 20px; stroke: #333; stroke-width: 2; }
.bd { font: 900 20px "Roboto", sans-serif; }
.form.fills { padding-top: 22px; }
.fills .swatch { width: 391px; height: 43px; }
.fills .swatch + .swatch { margin-top: 12px; }
.r-stroke { margin-top: 11px; }
.r-stroke .field:first-child { width: 190px; margin-right: 12px; }
.r-stroke .field:last-child { width: 189px; }
.q { font: bold 20px "Liberation Sans", sans-serif; color: #222; padding-left: 35px; }
.solid { font-size: 22px; color: #999; padding-left: 33px; }
.props-v b { height: 517px; margin-top: -2px; }

/* taskbar */
.taskbar { height: 30px; flex: none; display: flex; position: relative; border-top: 1px solid #3e4a5c; background: linear-gradient(90deg, #8292aa 0, #8a9bb4 40px, #a5bedb 75px, #a5bedb 1590px, #8292aa 1620px, #8292aa); color: #fff; font-family: "Open Sans", sans-serif; z-index: 3; }
.orb { margin-top: -6px; width: 51px; }
.tray { margin-left: auto; display: flex; font-size: 12px; }
.lang { line-height: 24px; letter-spacing: -.5px; font-size: 12.5px; margin-right: 8px; }
.clock { line-height: 31px; margin-left: 17px; letter-spacing: -.6px; width: 32px; }
.desk { width: 15px; height: 30px; border: 1px solid #4d5b70; background: linear-gradient(90deg, #9fb0c5, #55657c); margin-left: 20px; }
```
